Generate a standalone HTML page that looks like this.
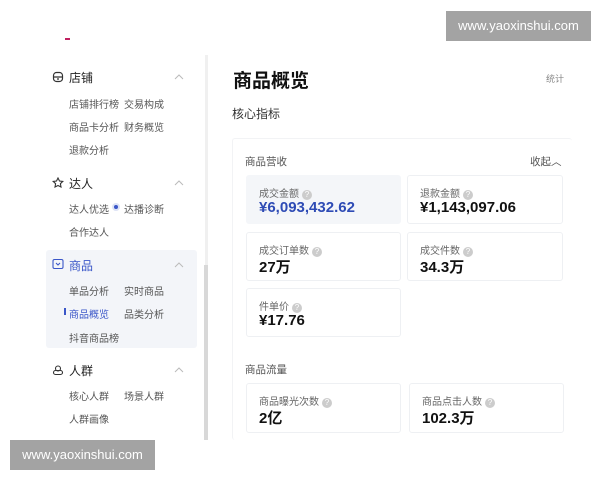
<!DOCTYPE html>
<html><head><meta charset="utf-8"><style>
*{margin:0;padding:0;box-sizing:border-box}
body{width:600px;height:480px;background:#fff;position:relative;overflow:hidden;font-family:"Liberation Sans","Noto Sans CJK SC",sans-serif;color:#333}
.a{position:absolute}
.sec{font-size:12px;color:#222}
.sub{font-size:10px;color:#555;position:absolute}
.car{position:absolute;left:174px;width:10px;height:6px}
.card{position:absolute;background:#fff;border:1px solid #eef0f3;border-radius:3px}
.lab{position:absolute;left:12px;top:9px;font-size:10px;color:#666}
.q{display:inline-block;width:10px;height:10px;border-radius:50%;background:#ccc;color:#fff;font-size:8px;text-align:center;line-height:10px;vertical-align:0px;margin-left:3px}
.val{position:absolute;left:12px;top:23px;font-size:15px;font-weight:bold;color:#111}
.wm{position:absolute;background:#a3a3a3;color:#fff;font-size:13px;text-align:center;line-height:30px}
</style></head><body>
<div class="a" style="left:65px;top:38px;width:5px;height:2px;background:#c02060"></div>
<div class="a" style="left:205px;top:55px;width:3px;height:385px;background:#f0f0f0"></div>
<div class="a" style="left:204px;top:265px;width:4px;height:175px;background:#d8d8d8"></div>
<div class="a" style="left:46px;top:250px;width:151px;height:98px;background:#f3f5f9;border-radius:3px"></div>

<svg class="a" style="left:52px;top:71px" width="12" height="12" viewBox="0 0 12 12" fill="none" stroke="#333" stroke-width="1.2"><rect x="1.5" y="1.5" width="9" height="9" rx="3"/><path d="M1.5 6h9M5 8h2"/></svg>
<div class="a sec" style="left:69px;top:69px">店铺</div>
<svg class="car" style="top:74px" viewBox="0 0 10 6" fill="none" stroke="#bbb"><path d="M1 5l4-4 4 4"/></svg>
<div class="sub" style="left:69px;top:96px">店铺排行榜</div><div class="sub" style="left:124px;top:96px">交易构成</div>
<div class="sub" style="left:69px;top:119px">商品卡分析</div><div class="sub" style="left:124px;top:119px">财务概览</div>
<div class="sub" style="left:69px;top:142px">退款分析</div>

<svg class="a" style="left:52px;top:177px" width="12" height="12" viewBox="0 0 12 12" fill="none" stroke="#333" stroke-width="1.1"><path d="M6 1l1.5 3 3.3.4-2.4 2.3.6 3.3L6 8.5 3 10l.6-3.3L1.2 4.4 4.5 4z"/></svg>
<div class="a sec" style="left:69px;top:175px">达人</div>
<svg class="car" style="top:180px" viewBox="0 0 10 6" fill="none" stroke="#bbb"><path d="M1 5l4-4 4 4"/></svg>
<div class="sub" style="left:69px;top:201px">达人优选</div>
<div class="a" style="left:112px;top:203px;width:8px;height:8px;border-radius:50%;background:#dde3f5"></div>
<div class="a" style="left:114px;top:205px;width:4px;height:4px;border-radius:50%;background:#3a56c8"></div>
<div class="sub" style="left:124px;top:201px">达播诊断</div>
<div class="sub" style="left:69px;top:224px">合作达人</div>

<svg class="a" style="left:52px;top:258px" width="12" height="12" viewBox="0 0 12 12" fill="none" stroke="#3a56c8" stroke-width="1.1"><rect x="1" y="1.5" width="10" height="9" rx="1.5"/><path d="M4 5l2 2 2-2"/></svg>
<div class="a sec" style="left:69px;top:257px;color:#3a56c8">商品</div>
<svg class="car" style="top:262px" viewBox="0 0 10 6" fill="none" stroke="#bbb"><path d="M1 5l4-4 4 4"/></svg>
<div class="sub" style="left:69px;top:283px">单品分析</div><div class="sub" style="left:124px;top:283px">实时商品</div>
<div class="a" style="left:64px;top:308px;width:2px;height:7px;background:#3a56c8"></div>
<div class="sub" style="left:69px;top:306px;color:#3a56c8">商品概览</div><div class="sub" style="left:124px;top:306px">品类分析</div>
<div class="sub" style="left:69px;top:330px">抖音商品榜</div>

<svg class="a" style="left:52px;top:364px" width="12" height="12" viewBox="0 0 12 12" fill="none" stroke="#333" stroke-width="1.1"><circle cx="6" cy="4.5" r="2.5"/><rect x="1.5" y="6.5" width="9" height="4" rx="2"/></svg>
<div class="a sec" style="left:69px;top:362px">人群</div>
<svg class="car" style="top:367px" viewBox="0 0 10 6" fill="none" stroke="#bbb"><path d="M1 5l4-4 4 4"/></svg>
<div class="sub" style="left:69px;top:388px">核心人群</div><div class="sub" style="left:124px;top:388px">场景人群</div>
<div class="sub" style="left:69px;top:411px">人群画像</div>

<div class="a" style="left:233px;top:66px;font-size:19px;font-weight:bold;color:#111">商品概览</div>
<div class="a" style="left:546px;top:72px;font-size:9px;color:#888">统计</div>
<div class="a" style="left:232px;top:105px;font-size:12px;color:#333">核心指标</div>

<div class="a" style="left:232px;top:138px;width:340px;height:302px;border:1px solid #f2f3f5;border-right:none;border-bottom:none;border-radius:3px"></div>
<div class="a" style="left:245px;top:154px;font-size:10.5px;color:#555">商品营收</div>
<div class="a" style="left:530px;top:154px;font-size:10.5px;color:#555">收起︿</div>

<div class="card" style="left:246px;top:175px;width:155px;height:49px;background:#f4f6f9;border-color:#f4f6f9"><div class="lab">成交金额<span class="q">?</span></div><div class="val" style="color:#2e4bb5">¥6,093,432.62</div></div>
<div class="card" style="left:407px;top:175px;width:156px;height:49px"><div class="lab">退款金额<span class="q">?</span></div><div class="val">¥1,143,097.06</div></div>
<div class="card" style="left:246px;top:232px;width:155px;height:49px"><div class="lab">成交订单数<span class="q">?</span></div><div class="val">27万</div></div>
<div class="card" style="left:407px;top:232px;width:156px;height:49px"><div class="lab">成交件数<span class="q">?</span></div><div class="val">34.3万</div></div>
<div class="card" style="left:246px;top:288px;width:155px;height:49px"><div class="lab">件单价<span class="q">?</span></div><div class="val">¥17.76</div></div>

<div class="a" style="left:245px;top:362px;font-size:10.5px;color:#555">商品流量</div>
<div class="card" style="left:246px;top:383px;width:155px;height:50px"><div class="lab">商品曝光次数<span class="q">?</span></div><div class="val">2亿</div></div>
<div class="card" style="left:409px;top:383px;width:155px;height:50px"><div class="lab">商品点击人数<span class="q">?</span></div><div class="val">102.3万</div></div>

<div class="a" style="left:0;top:440px;width:600px;height:40px;background:#fff"></div>
<div class="wm" style="left:446px;top:11px;width:145px;height:30px">www.yaoxinshui.com</div>
<div class="wm" style="left:10px;top:440px;width:145px;height:30px">www.yaoxinshui.com</div>
</body></html>
